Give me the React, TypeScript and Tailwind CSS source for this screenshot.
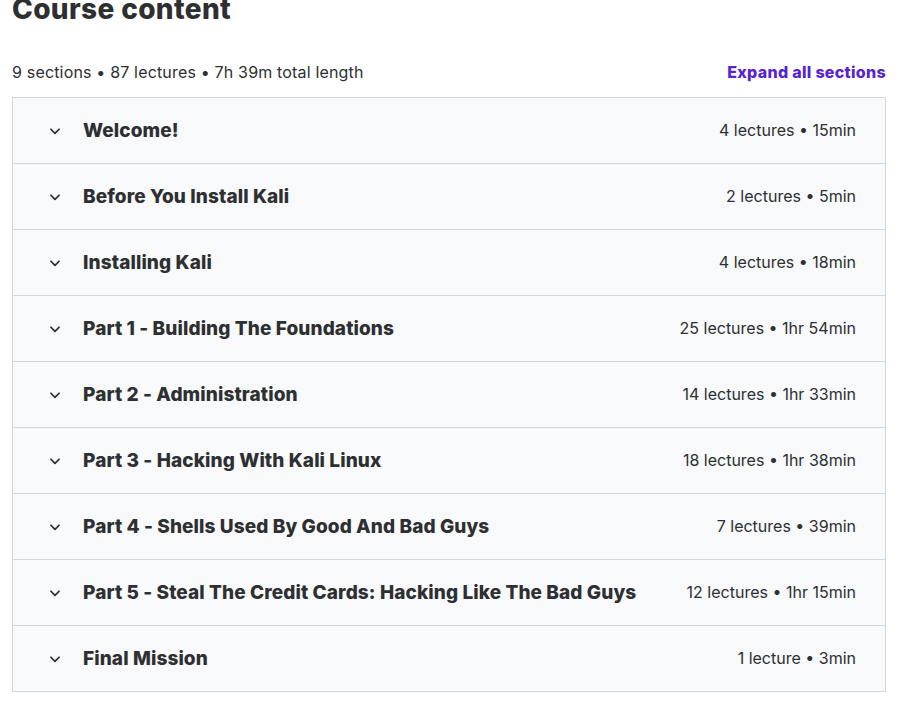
import React from 'react';

// Course sections shown in the curriculum accordion
const SECTIONS = [
  { title: 'Welcome!', meta: '4 lectures • 15min' },
  { title: 'Before You Install Kali', meta: '2 lectures • 5min' },
  { title: 'Installing Kali', meta: '4 lectures • 18min' },
  { title: 'Part 1 - Building The Foundations', meta: '25 lectures • 1hr 54min' },
  { title: 'Part 2 - Administration', meta: '14 lectures • 1hr 33min' },
  { title: 'Part 3 - Hacking With Kali Linux', meta: '18 lectures • 1hr 38min' },
  { title: 'Part 4 - Shells Used By Good And Bad Guys', meta: '7 lectures • 39min' },
  { title: 'Part 5 - Steal The Credit Cards: Hacking Like The Bad Guys', meta: '12 lectures • 1hr 15min' },
  { title: 'Final Mission', meta: '1 lecture • 3min' },
];

const Chevron = () => (
  <svg viewBox="0 0 24 24" className="w-[14px] h-[14px] text-[#2d2f31]" fill="none" stroke="currentColor" strokeWidth={3} strokeLinecap="round" strokeLinejoin="round">
    <path d="M5 9l7 7 7-7" />
  </svg>
);

export default function App() {
  return (
    <div className="min-h-screen bg-white font-['Inter','Liberation_Sans',Arial,sans-serif] text-[#2d2f31]">
      <div className="pl-[12px] pr-[11px]">
        <h2 className="text-[28px] font-extrabold leading-[28px] -mt-[5px] tracking-[0.35px]">Course content</h2>
        <div className="flex items-center justify-between mt-[36px] h-[26px]">
          <span className="text-[16px] tracking-[0.17px]">9 sections • 87 lectures • 7h 39m total length</span>
          <button type="button" className="text-[16px] font-extrabold tracking-[0.3px] text-[#5624d0]">Expand all sections</button>
        </div>
        <div className="mt-[12px] border border-[#d1d7dc] bg-[#f7f9fa]">
          {SECTIONS.map((section, i) => (
            <div
              key={section.title}
              className={`flex items-center h-[65px] pl-[35px] pr-[29px] ${i > 0 ? 'border-t border-[#d1d7dc] h-[66px]' : ''}`}
            >
              <Chevron />
              <span className="ml-[21px] pt-[2px] text-[19px] font-extrabold tracking-[0.1px] flex-1">{section.title}</span>
              <span className="text-[16px] -mt-[1px]">{section.meta}</span>
            </div>
          ))}
        </div>
      </div>
    </div>
  );
}
